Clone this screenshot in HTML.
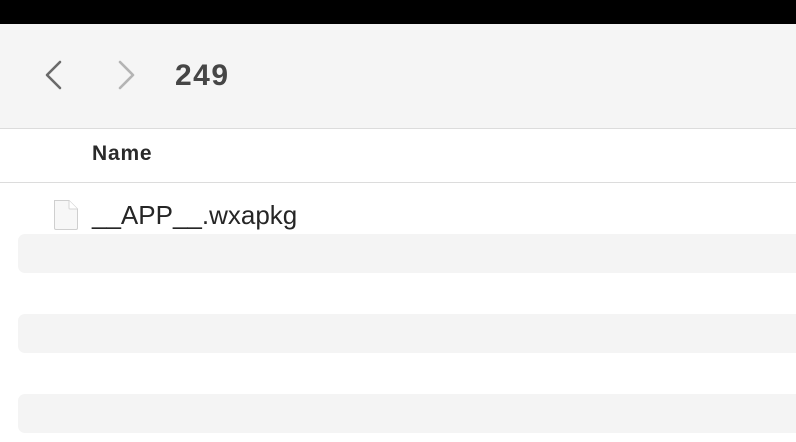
<!DOCTYPE html>
<html><head><meta charset="utf-8"><style>
html,body{margin:0;padding:0;width:796px;height:442px;overflow:hidden;background:#fff;font-family:"Liberation Sans",Helvetica,Arial,sans-serif;}
.top{position:absolute;left:0;top:0;width:796px;height:24px;background:#000;}
.tb{position:absolute;left:0;top:24px;width:796px;height:104px;background:#f5f5f5;border-bottom:1px solid #dcdcdc;}
.title{position:absolute;left:175px;top:35px;font-size:30px;font-weight:bold;color:#464646;letter-spacing:1.5px;}
.hdr{position:absolute;left:92px;top:142px;font-size:21px;font-weight:bold;color:#2a2a2a;letter-spacing:0.8px;}
.hline{position:absolute;left:0;top:182px;width:796px;height:1px;background:#dcdcdc;}
.fname{position:absolute;left:92px;top:200px;font-size:26px;color:#262626;}
.stripe{position:absolute;left:18px;width:800px;height:39px;background:#f4f4f4;border-radius:7px;}
</style></head><body>
<div class="top"></div>
<div class="tb">
<svg style="position:absolute;left:40px;top:35px" width="30" height="32" viewBox="0 0 30 32"><path d="M20 3 L7 16 L20 29" fill="none" stroke="#6a6a6a" stroke-width="2.6" stroke-linecap="round" stroke-linejoin="round"/></svg>
<svg style="position:absolute;left:112px;top:35px" width="30" height="32" viewBox="0 0 30 32"><path d="M8 3 L21 16 L8 29" fill="none" stroke="#b4b4b4" stroke-width="2.6" stroke-linecap="round" stroke-linejoin="round"/></svg>
<div class="title">249</div>
</div>
<div class="hdr">Name</div>
<div class="hline"></div>
<svg style="position:absolute;left:52px;top:199px" width="28" height="32" viewBox="0 0 28 32"><path d="M2.5 1.5 H17 L25.5 10 V29 Q25.5 30.5 24 30.5 H4 Q2.5 30.5 2.5 29 Z" fill="#f7f7f7" stroke="#cfcfcf" stroke-width="1"/><path d="M17 1.5 V9 Q17 10 18 10 H25.5" fill="#fff" stroke="#d5d5d5" stroke-width="1"/></svg>
<div class="fname">__APP__.wxapkg</div>
<div class="stripe" style="top:234px"></div>
<div class="stripe" style="top:314px"></div>
<div class="stripe" style="top:394px"></div>
</body></html>
